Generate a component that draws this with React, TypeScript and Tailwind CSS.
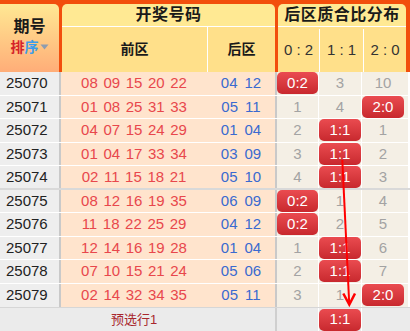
type Ratio = "0:2" | "1:1" | "2:0";

type Draw = {
  issue: string;
  front: string[];
  back: string[];
  dist: [string, string, string];
  hit: Ratio;
};

const rows: Draw[] = [
  { issue: "25070", front: ["08", "09", "15", "20", "22"], back: ["04", "12"], dist: ["", "3", "10"], hit: "0:2" },
  { issue: "25071", front: ["01", "08", "25", "31", "33"], back: ["05", "11"], dist: ["1", "4", ""], hit: "2:0" },
  { issue: "25072", front: ["04", "07", "15", "24", "29"], back: ["01", "04"], dist: ["2", "", "1"], hit: "1:1" },
  { issue: "25073", front: ["01", "04", "17", "33", "34"], back: ["03", "09"], dist: ["3", "", "2"], hit: "1:1" },
  { issue: "25074", front: ["02", "11", "15", "18", "21"], back: ["05", "10"], dist: ["4", "", "3"], hit: "1:1" },
  { issue: "25075", front: ["08", "12", "16", "19", "35"], back: ["06", "09"], dist: ["", "1", "4"], hit: "0:2" },
  { issue: "25076", front: ["11", "18", "22", "25", "29"], back: ["04", "12"], dist: ["", "2", "5"], hit: "0:2" },
  { issue: "25077", front: ["12", "14", "16", "19", "28"], back: ["01", "04"], dist: ["1", "", "6"], hit: "1:1" },
  { issue: "25078", front: ["07", "10", "15", "21", "24"], back: ["05", "06"], dist: ["2", "", "7"], hit: "1:1" },
  { issue: "25079", front: ["02", "14", "32", "34", "35"], back: ["05", "11"], dist: ["3", "1", ""], hit: "2:0" },
];

const ratios: Ratio[] = ["0:2", "1:1", "2:0"];

function Badge({ label }: { label: string }) {
  return (
    <div className="flex h-[22px] w-[42px] items-center justify-center rounded-[5px] bg-gradient-to-b from-[#EA4B50] to-[#C8282E] text-[15px] text-white">
      {label}
    </div>
  );
}

function DistCells({ dist, hit }: { dist?: [string, string, string]; hit?: Ratio }) {
  const widths = ["w-[42px] border-r border-white", "w-[43px] border-r border-white", "w-[46px]"];
  return (
    <>
      {ratios.map((r, i) => (
        <div key={r} className={`${widths[i]} flex h-full items-center ${i === 2 ? "justify-start" : "justify-center"}`}>
          {hit === r ? <Badge label={r} /> : <span className="w-[42px] text-center text-[15px] text-[#A3A3A3]">{dist ? dist[i] : ""}</span>}
        </div>
      ))}
    </>
  );
}

function Row({ d, idx }: { d: Draw; idx: number }) {
  const sep = idx === 4 ? "border-b-2 border-[#D9D9D9]" : idx === 9 ? "" : "border-b border-white";
  return (
    <div className={`flex h-[23.5px] ${sep}`}>
      <div className="flex w-[59px] items-center bg-[#EEEEEE] pl-[6px] text-[15px] text-[#222]">{d.issue}</div>
      <div className="w-[2px] bg-[#C9C9C9]" />
      <div className="flex w-[146px] items-center justify-center gap-[5.6px] bg-[#FFE4CD] text-[15px] text-[#E8474C]">
        {d.front.map((n, i) => (
          <span key={i}>{n}</span>
        ))}
      </div>
      <div className="flex w-[68px] items-center justify-center gap-[7px] bg-[#FFE4CD] text-[15px] text-[#3A6AD0]">
        {d.back.map((n, i) => (
          <span key={i}>{n}</span>
        ))}
      </div>
      <div className="w-[2px] bg-[#C9C9C9]" />
      <div className="flex bg-[#F4EFE5]">
        <DistCells dist={d.dist} hit={d.hit} />
      </div>
    </div>
  );
}

export default function App() {
  return (
    <div className="relative h-[331px] w-[410px] overflow-hidden bg-white font-['Liberation_Sans','Noto_Sans_CJK_SC',sans-serif]">
      {/* header */}
      <div className="flex h-[72px] bg-[#F24E0C] pt-[4px] text-[#1A1A1A]">
        <div className="flex w-[59px] flex-col items-center rounded-tr-[5px] bg-gradient-to-b from-[#FFE893] to-[#FFAD78] pt-[13px]">
          <span className="text-[16px] font-bold leading-[20px]">期号</span>
          <span className="flex items-center text-[14px] font-bold leading-[20px]">
            <span className="text-[#D5222A]">排</span>
            <span className="text-[#3B9CEB]">序</span>
            <svg width="9" height="6" viewBox="0 0 9 6" className="ml-[1px]">
              <path d="M0.5 0.5 L8.5 0.5 L4.5 5.5 Z" fill="#8D9CB0" />
            </svg>
          </span>
        </div>
        <div className="ml-[3px] flex w-[213px] flex-col overflow-hidden rounded-t-[5px]">
          <div className="flex h-[23px] items-center justify-center border-b border-white bg-[#FFE993] text-[16px] font-bold tracking-[0.5px]">
            开奖号码
          </div>
          <div className="flex flex-1 bg-[#FFE08A] text-[14px] font-bold">
            <div className="flex w-[146px] items-center justify-center border-r border-white">前区</div>
            <div className="flex flex-1 items-center justify-center">后区</div>
          </div>
        </div>
        <div className="ml-[3px] flex w-[128px] flex-col overflow-hidden rounded-t-[5px]">
          <div className="flex h-[23px] items-center justify-center border-b border-white bg-[#FFE993] text-[16px] font-bold tracking-[0.5px]">
            后区质合比分布
          </div>
          <div className="flex flex-1 bg-[#FFE08A] pt-[2px] text-[15px] text-[#333]">
            <div className="flex w-[42px] items-center justify-center border-r border-white">0 : 2</div>
            <div className="flex w-[44px] items-center justify-center border-r border-white">1 : 1</div>
            <div className="flex flex-1 items-center justify-center">2 : 0</div>
          </div>
        </div>
      </div>

      {/* draws */}
      {rows.map((d, i) => (
        <Row key={d.issue} d={d} idx={i} />
      ))}

      {/* prediction row */}
      <div className="flex h-[24px] border-t border-[#D6D6D6] bg-[#EBEBEB]">
        <div className="w-[61px]" />
        <div className="flex w-[146px] items-center justify-center text-[13px] text-[#A8272D]">预选行1</div>
        <div className="w-[68px]" />
        <div className="w-[2px] bg-[#CFCFCF]" />
        <DistCells hit="1:1" />
      </div>

      {/* trend arrow */}
      <svg className="pointer-events-none absolute left-0 top-0" width="410" height="331" viewBox="0 0 410 331">
        <line x1="342.3" y1="160" x2="349.2" y2="303" stroke="#FF0000" strokeWidth="2" />
        <polyline points="343.3,293.5 349.3,304.5 355,293.5" fill="none" stroke="#FF0000" strokeWidth="2.5" />
      </svg>
    </div>
  );
}
